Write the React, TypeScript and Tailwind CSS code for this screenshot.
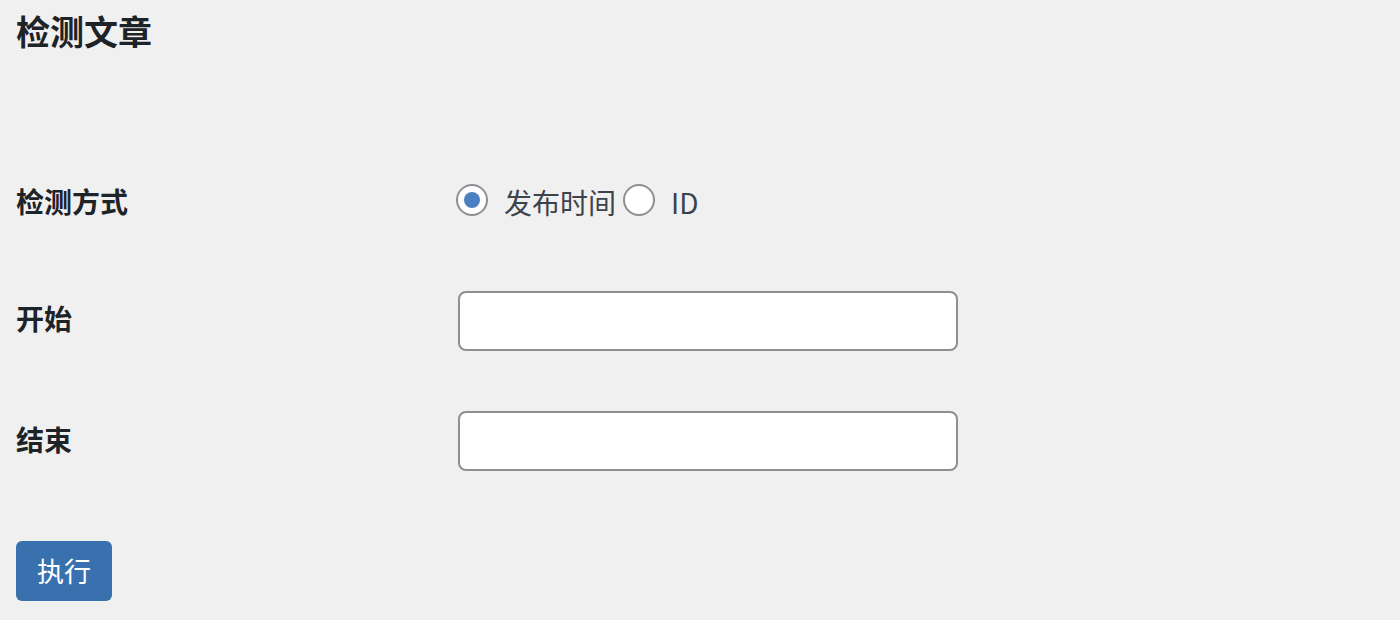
import { useState } from 'react';

const font = { fontFamily: '"Noto Sans CJK SC", "Noto Sans", sans-serif' };

const Radio = ({ checked, label, onClick }: { checked: boolean; label: string; onClick: () => void }) => (
  <label className="flex items-center cursor-pointer" onClick={onClick}>
    <span className="flex h-8 w-8 items-center justify-center rounded-full border-2 border-[#8c8f94] bg-white">
      {checked && <span className="h-4 w-4 rounded-full bg-[#4a80c0]" />}
    </span>
    <span className="ml-4 mr-[7px] pt-1 text-[28px] leading-none text-[#3c434a]">{label}</span>
  </label>
);

export default function App() {
  const [mode, setMode] = useState<'time' | 'id'>('time');

  return (
    <div className="min-h-screen w-full bg-[#f0f0f1] pl-4 text-[#1d2327]" style={font}>
      <div className="flex h-[62px] items-center">
        <h1 className="text-[34px] font-bold leading-none">检测文章</h1>
      </div>

      <div className="mt-[79px]">
        <div className="flex h-[120px] items-center">
          <div className="w-[440px] text-[28px] font-bold leading-none">检测方式</div>
          <div className="-mt-[3px] flex items-center">
            <Radio checked={mode === 'time'} label="发布时间" onClick={() => setMode('time')} />
            <Radio checked={mode === 'id'} label="ID" onClick={() => setMode('id')} />
          </div>
        </div>

        <div className="flex h-[120px] items-center">
          <div className="-mt-[6px] w-[440px] text-[28px] font-bold leading-none">开始</div>
          <input type="text" className="ml-[2px] h-[60px] w-[500px] rounded-lg border-2 border-[#8c8f94] bg-white px-3 text-[26px] outline-none" />
        </div>

        <div className="flex h-[120px] items-center">
          <div className="-mt-1 w-[440px] text-[28px] font-bold leading-none">结束</div>
          <input type="text" className="ml-[2px] h-[60px] w-[500px] rounded-lg border-2 border-[#8c8f94] bg-white px-3 text-[26px] outline-none" />
        </div>
      </div>

      <button className="mt-10 flex h-[60px] w-[96px] items-center justify-center rounded-md bg-[#3871ad] pb-[2px] text-[27px] leading-none text-white">
        执行
      </button>
    </div>
  );
}
